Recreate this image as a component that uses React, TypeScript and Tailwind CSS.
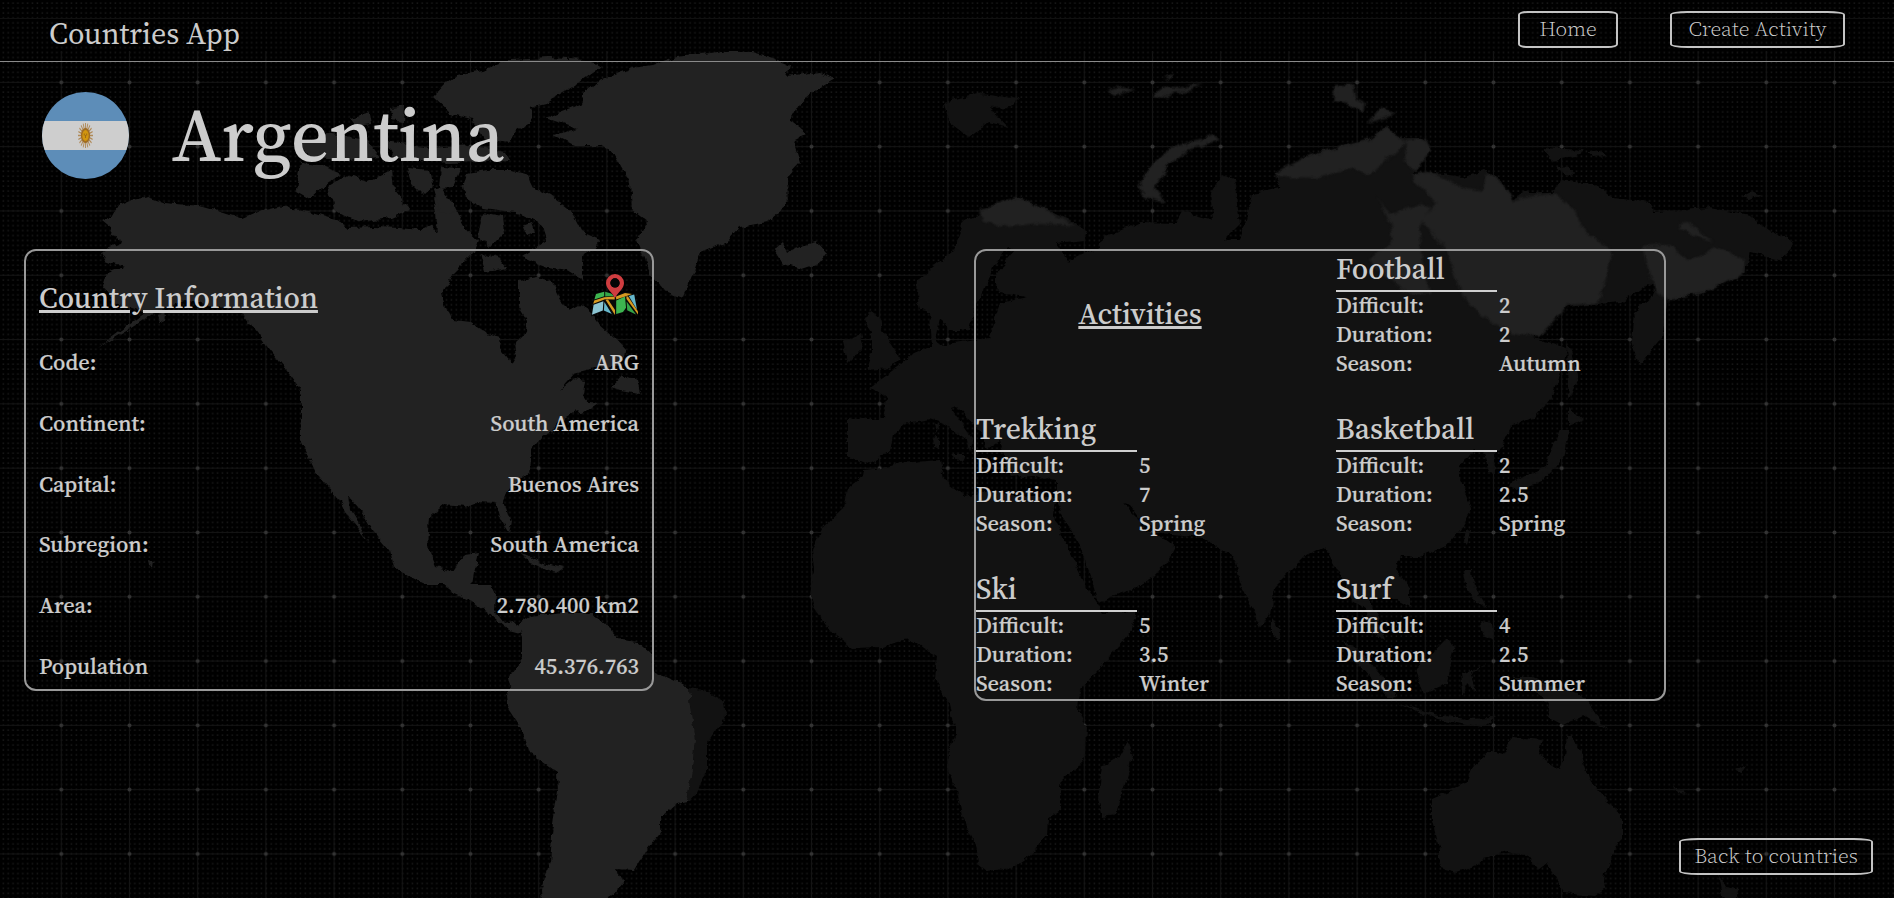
import React from "react";

const LIGHT_LAND: string[] = [
  // North and Central America
  "101,221 113,215 118,206 132,200 148,197 165,203 200,206 225,213 243,219 262,211 283,206 292,209 310,211 335,219 347,228 375,227 400,228 420,230 432,225 438,233 436,212 433,198 440,190 447,203 455,208 458,215 465,228 478,240 474,252 453,273 442,293 449,312 453,320 470,322 487,333 500,337 501,350 513,364 517,357 515,343 526,332 527,320 519,307 519,280 538,277 551,282 560,300 570,310 579,305 590,312 598,323 615,338 626,350 625,357 615,367 594,368 575,373 560,390 575,378 585,380 583,395 588,402 598,403 581,415 577,410 558,422 551,432 543,437 532,450 530,470 509,488 504,500 511,523 509,533 500,517 496,503 479,502 466,507 444,505 429,517 427,547 436,567 453,572 464,555 479,553 474,573 472,585 491,585 495,593 494,610 504,623 513,621 522,627 520,633 509,630 491,615 470,600 453,592 444,585 427,585 393,567 389,550 372,530 359,507 348,495 350,510 370,543 359,530 348,517 338,497 316,473 301,440 301,390 284,367 265,343 261,337 244,315 226,307 205,305 184,300 171,305 154,313 128,330 98,348 122,330 145,313 115,303 103,287 107,273 124,267 105,260 100,252 122,243 112,230",
  // South America
  "530,617 563,613 593,615 613,630 622,640 637,642 650,653 655,672 680,683 688,688 690,705 695,740 692,770 687,801 677,803 661,817 661,832 647,850 635,870 615,869 623,883 613,895 597,904 542,904 541,890 550,863 553,823 558,790 557,773 530,753 522,730 507,707 506,695 510,688 507,680 523,657 523,637 518,625",
  // Arctic archipelago
  "467,173 487,170 510,170 527,175 533,187 550,195 573,213 583,233 600,240 590,253 583,257 583,280 567,270 547,267 520,257 547,240 543,227 523,213 483,208 465,198 463,187",
  "482,213 502,217 504,233 490,247 478,237",
  "480,252 500,258 508,268 485,272",
  "433,190 442,187 453,205 455,212 440,213",
  "408,168 429,170 433,187 424,195 412,183",
  "441,167 461,168 453,187 439,188",
  "327,187 347,175 367,182 392,170 394,190 410,210 392,218 359,222 335,210",
  "300,163 318,165 341,173 322,187 310,198 296,190",
  "302,143 327,133 367,140 380,157 347,160 310,158",
  "385,140 430,148 470,145 505,152 510,160 450,162 395,158",
  "350,118 370,113 372,124 356,126",
  "390,108 405,106 404,122 392,120",
  "523,227 532,224 535,232 526,235",
  "483,70 510,60 550,58 587,60 600,68 573,87 547,103 530,107 533,120 517,130 510,143 483,140 473,120 450,113 433,97 447,82 457,75",
  // Greenland and Iceland
  "545,118 583,103 583,93 600,80 633,68 653,65 677,57 717,52 753,52 773,58 790,65 787,77 820,73 835,79 813,92 800,102 790,120 807,133 793,140 800,163 787,177 788,205 767,222 740,227 727,242 700,253 693,273 683,298 663,290 650,273 637,240 648,222 632,210 630,183 613,153 600,145 573,145 553,135 577,129",
  "775,250 783,243 787,253 793,248 817,242 827,253 820,263 802,269 783,263",
  // Newfoundland, Cuba, Hispaniola
  "611,387 622,375 637,380 640,393 620,390",
  "521,553 543,563 564,568 556,573 530,562",
  "148,560 154,562 153,568 149,566",
  "158,316 167,314 166,320 160,322",
];

const DARK_LAND: string[] = [
  // Brazil's eastern coast
  "688,688 703,690 725,702 727,713 707,743 707,770 697,793 690,801 687,801 692,770 695,740 690,705",
  // Africa
  "863,470 883,468 900,463 940,460 943,480 967,497 990,490 1020,497 1056,497 1054,517 1070,553 1088,590 1098,605 1102,612 1137,611 1130,633 1098,670 1080,689 1078,713 1086,725 1085,758 1060,782 1060,811 1048,819 1047,835 1030,856 1013,868 987,871 978,864 975,844 963,819 957,791 948,770 948,754 956,733 950,705 935,680 937,656 923,648 913,640 897,642 883,647 853,648 830,631 813,607 810,595 814,570 812,550 822,529 843,509 847,489 862,476",
  "1127,742 1132,754 1128,775 1115,815 1103,817 1098,799 1102,766 1118,758",
  // British Isles
  "870,310 880,317 882,331 890,342 900,358 890,368 867,370 872,354 872,333 863,321",
  "843,342 860,335 863,348 848,363",
  // Arctic islands
  "944,103 982,93 1020,98 1011,107 990,108 1009,128 988,123 970,138 950,123",
  "1543,148 1584,150 1575,157 1551,160",
  "1587,152 1600,152 1607,157 1594,158",
  "1557,167 1568,166 1575,175 1562,174",
  "1742,197 1752,192 1760,196 1750,200",
  // Japan and Sakhalin
  "1566,343 1572,350 1578,380 1569,400 1567,370",
  "1569,407 1584,420 1569,427",
  "1560,430 1569,430 1563,457 1545,480 1516,490 1510,483 1545,467",
  // South-east Asia and Oceania
  "1465,528 1470,530 1467,545 1463,540",
  "1464,570 1472,570 1474,587 1486,607 1479,604 1467,590",
  "1480,622 1492,624 1494,640 1484,636",
  "1272,618 1281,630 1279,640 1272,636",
  "1343,640 1362,652 1382,677 1396,697 1388,698 1364,670",
  "1415,670 1447,637 1454,650 1447,683 1424,693",
  "1461,675 1488,664 1470,674 1476,692 1468,684 1464,698",
  "1396,702 1433,714 1466,719 1495,718 1482,728 1433,718",
  "1513,677 1533,677 1587,700 1607,730 1583,715 1563,725 1548,717 1550,703",
  "1432,798 1467,783 1473,767 1493,750 1503,753 1512,737 1542,740 1538,755 1560,769 1565,757 1567,735 1572,735 1582,755 1590,780 1608,803 1622,813 1622,837 1605,873 1603,888 1593,895 1563,892 1553,873 1547,863 1538,870 1527,855 1507,852 1483,858 1477,865 1457,872 1440,868 1440,850 1432,820",
  "1718,873 1725,887 1740,890 1733,904 1722,896",
  "1674,785 1686,795 1680,794",
  "1736,770 1746,764 1740,773",
  // Mediterranean islands
  "934,425 938,424 937,435",
  "933,437 938,436 938,449 934,447",
  "952,455 965,455 962,462",
];

const EURASIA =
  "M1017,197 988,210 965,220 953,250 918,280 917,295 920,309 930,313 932,346 913,354 900,366 883,378 870,387 887,399 883,419 848,419 848,456 867,464 890,452 893,435 907,423 930,419 943,423 967,440 970,452 973,440 952,409 957,407 980,431 987,448 1000,440 1005,462 1010,478 1030,475 1056,480 1056,497 1062,515 1080,545 1092,580 1097,602 1125,593 1153,577 1169,560 1176,547 1162,537 1144,530 1137,517 1123,503 1130,505 1144,523 1162,533 1203,537 1217,547 1235,557 1240,583 1261,627 1272,610 1274,587 1304,557 1325,547 1341,577 1352,600 1364,607 1373,633 1385,640 1378,617 1369,600 1392,597 1410,607 1410,590 1396,570 1401,557 1419,557 1447,545 1460,530 1472,507 1460,480 1460,467 1474,450 1484,455 1489,472 1495,473 1494,455 1500,450 1511,427 1534,417 1552,397 1561,373 1566,347 1534,338 1566,307 1621,302 1640,290 1658,280 1650,300 1634,312 1631,340 1639,365 1663,337 1669,300 1710,290 1745,273 1751,253 1780,260 1796,243 1769,230 1751,215 1710,208 1654,212 1651,202 1613,198 1598,185 1560,180 1554,193 1522,193 1510,200 1501,180 1484,170 1463,177 1428,172 1410,175 1431,150 1422,138 1399,138 1387,127 1369,140 1334,148 1305,157 1302,170 1276,173 1281,187 1252,193 1246,220 1240,240 1223,240 1240,223 1234,180 1223,175 1211,193 1214,220 1182,212 1176,223 1141,222 1102,238 1100,247 1076,257 1070,263 1056,243 1085,240 1088,230 1070,220 1041,207Z M1008,247 993,268 984,290 974,310 970,330 948,330 940,318 936,340 940,345 990,338 996,315 1000,303 1027,297 1000,293 995,282 1002,265 1015,250Z";

const HIGHLIGHTS: string[] = [
  "1276,173 1305,157 1334,148 1369,140 1387,127 1399,138 1406,143 1390,157 1369,175 1349,168 1322,178 1276,177",
  "1406,140 1425,138 1431,150 1415,172 1405,160",
  "1410,175 1428,172 1463,187 1484,192 1487,172 1504,185 1513,200 1554,193 1572,207 1584,230 1613,252 1598,303 1569,305 1540,337 1513,333 1480,315 1463,297 1446,250 1422,220 1437,203",
  "1378,198 1390,215 1422,203 1431,207 1419,227 1422,260 1431,293 1405,293 1369,260 1393,240 1390,223",
  "1642,247 1669,245 1689,260 1716,247 1745,260 1745,273 1710,290 1669,300 1654,290",
  "1678,223 1689,222 1713,242 1680,230",
  "979,210 1017,197 1041,207 1076,227 1041,223 1006,227 985,222",
  "1138,187 1152,163 1170,148 1214,135 1220,140 1188,150 1167,167 1155,187 1164,203 1146,197",
  "1108,90 1116,87 1135,89 1128,92 1114,95",
  "1152,95 1166,86 1180,88 1202,84 1190,91 1174,92 1168,98",
  "1163,77 1172,74 1170,80",
  "1335,85 1352,85 1356,98 1366,103 1364,112 1347,104 1333,102",
  "1381,107 1396,115 1367,123",
];

function WorldMap() {
  return (
    <svg
      className="pointer-events-none absolute inset-0"
      width="1894"
      height="898"
      viewBox="0 0 1894 898"
      aria-hidden="true"
    >
      <defs>
        <pattern id="minor" x="60.4" y="81.1" width="4.871" height="4.946" patternUnits="userSpaceOnUse">
          <rect x="0.6" y="0.4" width="1.5" height="1.5" fill="#191919" />
        </pattern>
        <pattern id="major" x="27.2" y="50.2" width="68.2" height="64.3" patternUnits="userSpaceOnUse">
          <path d="M34.1 0V64.3M0 32.1H68.2" stroke="#141414" strokeWidth="1" />
          <circle cx="34.1" cy="32.1" r="2" fill="#343434" />
        </pattern>
        <filter
          id="coast"
          x="0"
          y="0"
          width="1894"
          height="898"
          filterUnits="userSpaceOnUse"
          colorInterpolationFilters="sRGB"
        >
          <feTurbulence type="fractalNoise" baseFrequency="0.1" numOctaves="3" seed="4" />
          <feDisplacementMap in="SourceGraphic" scale="7" xChannelSelector="R" yChannelSelector="G" />
        </filter>
        <filter id="soft" x="-5%" y="-5%" width="110%" height="110%" colorInterpolationFilters="sRGB">
          <feGaussianBlur stdDeviation="1.1" />
        </filter>
      </defs>
      <rect width="1894" height="898" fill="#000" />
      <rect width="1894" height="898" fill="url(#minor)" />
      <rect y="51" width="1894" height="847" fill="url(#major)" />
      <path d="M0 18.5H1894" stroke="#101010" />
      <g filter="url(#coast)">
        <g fill="#121212">
          {DARK_LAND.map((points) => (
            <polygon key={points} points={points} />
          ))}
          <path d={EURASIA} fillRule="evenodd" />
        </g>
        <g fill="#222222">
          {LIGHT_LAND.map((points) => (
            <polygon key={points} points={points} />
          ))}
        </g>
        <g fill="#212121" filter="url(#soft)">
          {HIGHLIGHTS.map((points) => (
            <polygon key={points} points={points} />
          ))}
        </g>
      </g>
    </svg>
  );
}

function Flag() {
  const rays = Array.from({ length: 20 }, (_, i) => i * 18);
  return (
    <svg className="mt-[30px] h-[87px] w-[87px] shrink-0" viewBox="0 0 87 87" role="img" aria-label="Flag of Argentina">
      <clipPath id="disc">
        <circle cx="43.5" cy="43.5" r="43.5" />
      </clipPath>
      <g clipPath="url(#disc)">
        <rect width="87" height="87" fill="#5d8db8" />
        <rect y="29" width="87" height="29" fill="#cecece" />
        <g transform="translate(43.5 43.5) scale(.6 1)" stroke="#b08a58" strokeWidth="1.5">
          {rays.map((a) => (
            <path key={a} d="M0 -5V-12.500" transform={`rotate(${a})`} />
          ))}
        </g>
        <ellipse cx="43.5" cy="43.5" rx="4.600" ry="7.600" fill="#a06c22" />
        <ellipse cx="43.5" cy="43.5" rx="3.200" ry="5.400" fill="#d2960e" />
        <path d="M42.3 41.5v2M44.7 41.5v2M43.5 43v3" stroke="#8d5a14" strokeWidth=".7" />
      </g>
    </svg>
  );
}

function MapIcon() {
  return (
    <svg className="mt-px h-[43px] w-[48px]" viewBox="0 0 48 43" aria-label="Map">
      <path d="M4.8 19 14 17 25 20.5 35 17.5 43.5 20 47.5 42 36.5 37 25.5 41.5 12.5 37 0 42.5Z" fill="#080808" />
      <path d="M5 20 13.2 17.8V22.3L3.4 25.6Z" fill="#3db550" />
      <path d="M14.2 17.8 20 19.4 23 22 14.2 22.5Z" fill="#35a548" />
      <path d="M3.2 26.6 13.2 23.2 23.7 22.5V25.5L14 25.2 2.2 29.8Z" fill="#d69a22" />
      <path d="M2.6 30.8 12.4 27.2 11.8 36.4 1 40.8Z" fill="#8bc4d2" />
      <path d="M13.4 28 20.8 40 12.9 36.6Z" fill="#66b7cb" />
      <path d="M14.5 25.8 17 25.5 24 36V41Z" fill="#d69a22" />
      <path d="M25.2 26.4 34 22.5 35 33.8 32 38 25.2 40Z" fill="#3db550" />
      <path d="M25 22.5 34 19 41 20 37 21.5 25.2 25.6Z" fill="#d69a22" />
      <path d="M37.8 22 43.2 20.6 46 35.8Z" fill="#66b7cb" />
      <path d="M35.3 22.2 37 22.5 47 37.6V40.5L35.5 25Z" fill="#d69a22" />
      <path d="M35.6 27.5 45 40.5 36.2 36.2Z" fill="#35a548" />
      <path
        fillRule="evenodd"
        d="M24 0a9 9 0 0 1 9 9c0 6-6 9-8.600 14.500h-.8C21 18 15 15 15 9a9 9 0 0 1 9-9Zm0 4.300a4.600 4.600 0 1 0 0 9.200a4.600 4.600 0 1 0 0-9.200Z"
        fill="#cf3d40"
      />
      <circle cx="24" cy="8.900" r="4.600" fill="#050505" />
    </svg>
  );
}

const INFO = [
  { label: "Code:", value: "ARG" },
  { label: "Continent:", value: "South America" },
  { label: "Capital:", value: "Buenos Aires" },
  { label: "Subregion:", value: "South America" },
  { label: "Area:", value: "2.780.400 km2" },
  { label: "Population", value: "45.376.763" },
];

const ACTIVITIES = [
  { name: "Football", difficult: "2", duration: "2", season: "Autumn" },
  { name: "Trekking", difficult: "5", duration: "7", season: "Spring" },
  { name: "Basketball", difficult: "2", duration: "2.5", season: "Spring" },
  { name: "Ski", difficult: "5", duration: "3.5", season: "Winter" },
  { name: "Surf", difficult: "4", duration: "2.5", season: "Summer" },
];

const HEADING = "text-[29.650px] leading-[35px] font-medium";
const BODY = "text-[22.350px] leading-[29px] font-medium [-webkit-text-stroke:0.2px_#cccccc]";
const BUTTON =
  "flex h-[37px] items-center justify-center border-2 border-[#c4c4c4] rounded-[10%] pb-[2px] text-[21.300px] leading-[29px] font-light text-[#d0d0d0]";

type Activity = (typeof ACTIVITIES)[number];

function ActivityCard({ name, difficult, duration, season }: Activity) {
  const rows = [
    ["Difficult:", difficult],
    ["Duration:", duration],
    ["Season:", season],
  ];
  return (
    <article className="h-[128px]">
      <h3 className={`${HEADING} h-[41px] w-[161px] border-b-2 border-[#d0d0d0]`}>{name}</h3>
      <div className="-mt-px">
        {rows.map(([label, value]) => (
          <div key={label} className={`${BODY} grid grid-cols-[163px_1fr]`}>
            <span>{label}</span>
            <span>{value}</span>
          </div>
        ))}
      </div>
    </article>
  );
}

export default function App() {
  return (
    <div className="relative h-[898px] w-[1894px] overflow-hidden bg-black font-['Source_Serif_4','Source_Serif_Pro','Noto_Serif_CJK_SC','Liberation_Serif',serif] text-[#cccccc]">
      <WorldMap />
      <div className="relative flex h-full flex-col">
        <header className="flex h-[62px] shrink-0 items-start justify-between border-b border-[#8a8a8a] pr-[49px] pl-[49px]">
          <span className="mt-[14px] text-[30px] leading-[39px]">Countries App</span>
          <nav className="mt-[11px] flex gap-[52px]">
            <button className={`${BUTTON} w-[100px]`}>Home</button>
            <button className={`${BUTTON} w-[175px]`}>Create Activity</button>
          </nav>
        </header>

        <div className="flex h-[187px] shrink-0 items-start pl-[42px]">
          <Flag />
          <h1 className="mt-[23px] ml-[43px] text-[74.300px] leading-[100px] font-medium">
            Argentina
          </h1>
        </div>

        <main className="flex items-start gap-[320px] pl-[24px]">
          <section className="flex h-[442px] w-[630px] shrink-0 flex-col rounded-[12px] border-2 border-[#999999] pr-[13px] pl-[13px]">
            <div className="mt-[22px] flex h-[75px] shrink-0 items-start justify-between">
              <h2 className={`${HEADING} mt-[7px] underline decoration-[3px] underline-offset-[2px]`}>Country Information</h2>
              <MapIcon />
            </div>
            <dl className="flex flex-col gap-[31.800px]">
              {INFO.map(({ label, value }) => (
                <div key={label} className={`${BODY} flex items-start justify-between`}>
                  <dt>{label}</dt>
                  <dd>{value}</dd>
                </div>
              ))}
            </dl>
          </section>

          <section className="grid h-[452px] w-[692px] shrink-0 grid-cols-[328px_328px] content-start gap-8 rounded-[12px] border-2 border-[#999999]">
            <div className="flex h-[128px] items-center justify-center pb-[3px]">
              <h2 className={`${HEADING} underline decoration-[3px] underline-offset-[2px]`}>Activities</h2>
            </div>
            {ACTIVITIES.map((activity) => (
              <ActivityCard key={activity.name} {...activity} />
            ))}
          </section>
        </main>

        <footer className="mt-auto flex justify-end pr-[21px] pb-[23px]">
          <button className={`${BUTTON} w-[194px]`}>Back to countries</button>
        </footer>
      </div>
    </div>
  );
}
